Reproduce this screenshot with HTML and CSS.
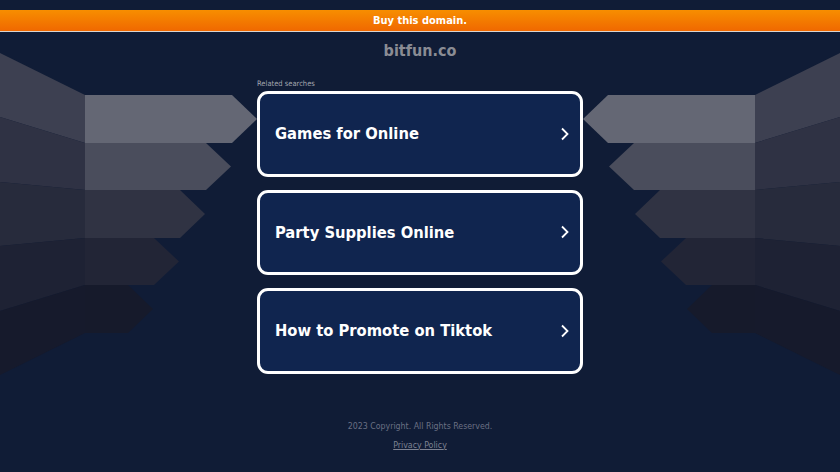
FILE: index.html
```html
<!DOCTYPE html>
<html lang="en">
<head>
    <meta charset="UTF-8">
    <meta name="viewport" content="width=device-width, initial-scale=1.0">
    <title>bitfun.co</title>
    <link rel="stylesheet" href="styles.css">
</head>
<body>
    <div class="buy-bar">Buy this domain.</div>

    <div class="stage">
        <svg class="wing" width="257" height="348" viewBox="0 0 257 348">
            <polygon fill="#3d4051" points="0,21 85,63 85,111 0,85"/>
            <polygon fill="#646774" points="85,63 232,63 257,87 232,111 85,111"/>
            <polygon fill="#2f3244" points="0,85 85,111 85,158 0,150"/>
            <polygon fill="#4a4d5c" points="85,111 206,111 231,134.5 206,158 85,158"/>
            <polygon fill="#272b3c" points="0,150 85,158 85,206 0,214"/>
            <polygon fill="#303343" points="85,158 180,158 205,182 180,206 85,206"/>
            <polygon fill="#1e2234" points="0,214 85,206 85,253 0,279"/>
            <polygon fill="#222536" points="85,206 154,206 179,229.5 154,253 85,253"/>
            <polygon fill="#161a2c" points="0,279 85,253 85,301 0,343"/>
            <polygon fill="#161a2b" points="85,253 128,253 153,277 128,301 85,301"/>
        </svg>

        <main class="center">
            <h1 class="domain">bitfun.co</h1>
            <div class="related">Related searches</div>
            <a class="card" href="#">
                <span>Games for Online</span>
                <svg width="10" height="14" viewBox="0 0 10 14"><path d="M2 1.5 L7.5 7 L2 12.5" fill="none" stroke="#fff" stroke-width="1.8"/></svg>
            </a>
            <a class="card" href="#">
                <span>Party Supplies Online</span>
                <svg width="10" height="14" viewBox="0 0 10 14"><path d="M2 1.5 L7.5 7 L2 12.5" fill="none" stroke="#fff" stroke-width="1.8"/></svg>
            </a>
            <a class="card" href="#">
                <span>How to Promote on Tiktok</span>
                <svg width="10" height="14" viewBox="0 0 10 14"><path d="M2 1.5 L7.5 7 L2 12.5" fill="none" stroke="#fff" stroke-width="1.8"/></svg>
            </a>
        </main>

        <svg class="wing wing-right" width="257" height="348" viewBox="0 0 257 348">
            <polygon fill="#3d4051" points="0,21 85,63 85,111 0,85"/>
            <polygon fill="#646774" points="85,63 232,63 257,87 232,111 85,111"/>
            <polygon fill="#2f3244" points="0,85 85,111 85,158 0,150"/>
            <polygon fill="#4a4d5c" points="85,111 206,111 231,134.5 206,158 85,158"/>
            <polygon fill="#272b3c" points="0,150 85,158 85,206 0,214"/>
            <polygon fill="#303343" points="85,158 180,158 205,182 180,206 85,206"/>
            <polygon fill="#1e2234" points="0,214 85,206 85,253 0,279"/>
            <polygon fill="#222536" points="85,206 154,206 179,229.5 154,253 85,253"/>
            <polygon fill="#161a2c" points="0,279 85,253 85,301 0,343"/>
            <polygon fill="#161a2b" points="85,253 128,253 153,277 128,301 85,301"/>
        </svg>
    </div>

    <footer class="footer">
        <div class="copyright">2023 Copyright. All Rights Reserved.</div>
        <a class="privacy" href="#">Privacy Policy</a>
    </footer>
</body>
</html>
```

FILE: styles.css
```css
body {
    font-family: 'DejaVu Sans Condensed', 'DejaVu Sans', sans-serif;
    background-color: #101c36;
    margin: 0;
    padding: 10px 0 0;
}

.buy-bar {
    height: 21px;
    line-height: 21px;
    text-align: center;
    color: #fff;
    font-size: 11px;
    font-weight: bold;
    background: linear-gradient(#f78e00, #f06800);
    border-bottom: 1px solid #d9d4d0;
}

.stage {
    display: grid;
    grid-template-columns: 257px 326px 257px;
}

.wing {
    display: block;
}

.wing-right {
    transform: scaleX(-1);
}

.center {
    display: flex;
    flex-direction: column;
}

.domain {
    margin: 9px 0 0;
    font-size: 16px;
    line-height: 20px;
    text-align: center;
    color: #8a8c94;
}

.related {
    margin-top: 18px;
    font-size: 7.5px;
    line-height: 10px;
    color: #a3a6ae;
}

.card {
    box-sizing: border-box;
    height: 85.5px;
    margin-top: 2px;
    margin-bottom: 11px;
    padding: 0 10px 0 15px;
    display: flex;
    align-items: center;
    justify-content: space-between;
    border: 3px solid #fff;
    border-radius: 11px;
    background-color: #10254f;
    color: #fff;
    font-size: 16.4px;
    font-weight: bold;
    text-decoration: none;
}

.footer {
    margin-top: 35px;
    text-align: center;
}

.copyright {
    font-size: 8.75px;
    line-height: 12px;
    color: #6a7083;
}

.privacy {
    display: inline-block;
    margin-top: 7px;
    font-size: 8.75px;
    line-height: 12px;
    color: #7d8292;
}
```
